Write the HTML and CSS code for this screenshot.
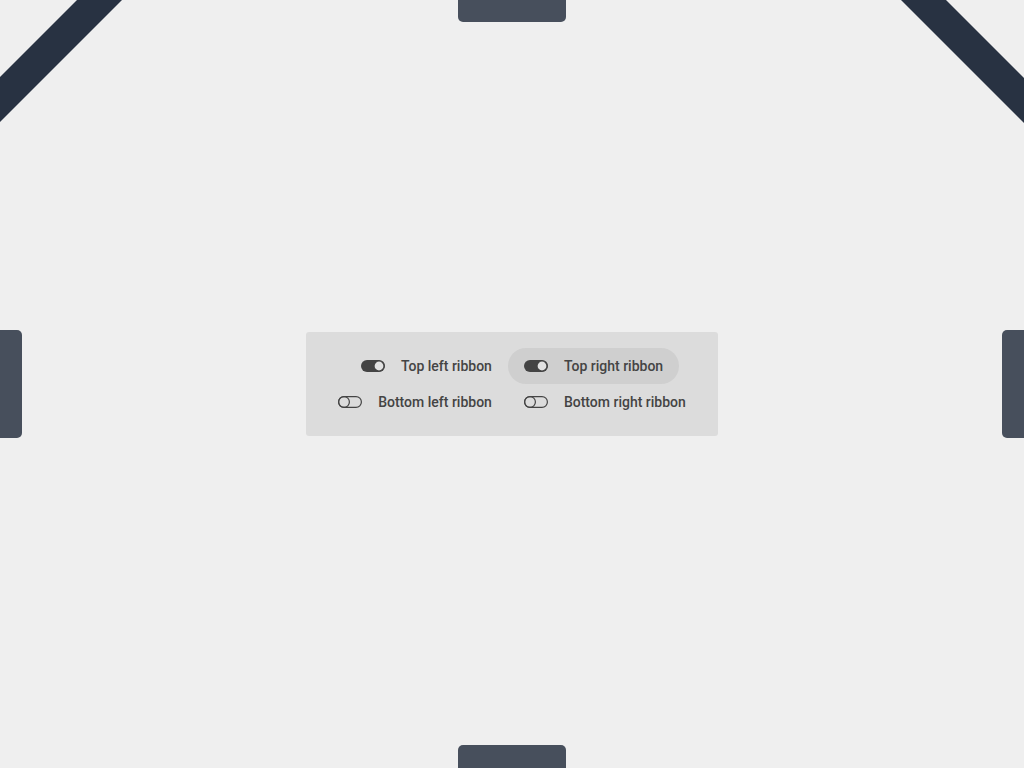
FILE: index.html
```html
<!DOCTYPE html>
<html lang="en">
<head>
<meta charset="utf-8">
<title>Ribbons</title>
<link rel="stylesheet" href="styles.css">
</head>
<body>
<svg class="ribbon ribbon-tl" width="130" height="130" viewBox="0 0 130 130"><polygon points="77,0 122,0 0,122 0,77"/></svg>
<svg class="ribbon ribbon-tr" width="130" height="130" viewBox="0 0 130 130"><polygon points="7,0 52,0 130,78 130,123"/></svg>
<div class="tab tab-top"></div>
<div class="tab tab-bottom"></div>
<div class="tab tab-left"></div>
<div class="tab tab-right"></div>

<main class="stage">
  <div class="panel">
    <label class="opt opt-left">
      <svg class="toggle" width="24" height="12" viewBox="0 0 24 12"><rect x="0" y="0" width="24" height="12" rx="6" class="on-track"/><circle cx="18" cy="6" r="5" class="on-knob"/></svg>
      <span>Top left ribbon</span>
    </label>
    <label class="opt opt-right hover">
      <svg class="toggle" width="24" height="12" viewBox="0 0 24 12"><rect x="0" y="0" width="24" height="12" rx="6" class="on-track"/><circle cx="18" cy="6" r="5" class="on-knob"/></svg>
      <span>Top right ribbon</span>
    </label>
    <label class="opt opt-left">
      <svg class="toggle" width="24" height="12" viewBox="0 0 24 12"><rect x="0.6" y="0.6" width="22.8" height="10.8" rx="5.4" class="off-track"/><circle cx="6" cy="6" r="5.4" class="off-knob"/></svg>
      <span>Bottom left ribbon</span>
    </label>
    <label class="opt opt-right">
      <svg class="toggle" width="24" height="12" viewBox="0 0 24 12"><rect x="0.6" y="0.6" width="22.8" height="10.8" rx="5.4" class="off-track"/><circle cx="6" cy="6" r="5.4" class="off-knob"/></svg>
      <span>Bottom right ribbon</span>
    </label>
  </div>
</main>
</body>
</html>
```
FILE: styles.css
```css
html, body {
  margin: 0;
  padding: 0;
}
body {
  background: #efefef;
  width: 1024px;
  height: 768px;
  overflow: hidden;
  position: relative;
  font-family: Roboto, "Liberation Sans", sans-serif;
}
.ribbon {
  position: absolute;
  top: 0;
  display: block;
}
.ribbon polygon {
  fill: #283242;
}
.ribbon-tl { left: 0; }
.ribbon-tr { right: 0; }

.tab {
  position: absolute;
  background: #474f5c;
}
.tab-top {
  top: 0;
  left: 458px;
  width: 108px;
  height: 22px;
  border-radius: 0 0 5px 5px;
}
.tab-bottom {
  bottom: 0;
  left: 458px;
  width: 108px;
  height: 23px;
  border-radius: 5px 5px 0 0;
}
.tab-left {
  left: 0;
  top: 330px;
  width: 22px;
  height: 108px;
  border-radius: 0 5px 5px 0;
}
.tab-right {
  right: 0;
  top: 330px;
  width: 22px;
  height: 108px;
  border-radius: 5px 0 0 5px;
}

.stage {
  height: 768px;
  display: flex;
  align-items: center;
  justify-content: center;
}
.panel {
  background: #dcdcdc;
  border-radius: 3px;
  padding: 16px;
  display: grid;
  grid-template-columns: auto auto;
}
.opt {
  display: flex;
  align-items: center;
  gap: 16px;
  height: 36px;
  padding: 0 16px;
  border-radius: 18px;
  font-size: 14px;
  font-weight: 500;
  color: #444444;
  white-space: nowrap;
}
.opt-left { justify-self: end; }
.opt-right { justify-self: start; }
.opt.hover { background: #cfcfcf; }
.toggle { display: block; flex: none; }
.on-track { fill: #444444; }
.on-knob { fill: #e2e2e2; stroke: #444444; stroke-width: 1.2; }
.off-track { fill: none; stroke: #444444; stroke-width: 1.2; }
.off-knob { fill: none; stroke: #444444; stroke-width: 1.2; }
```
